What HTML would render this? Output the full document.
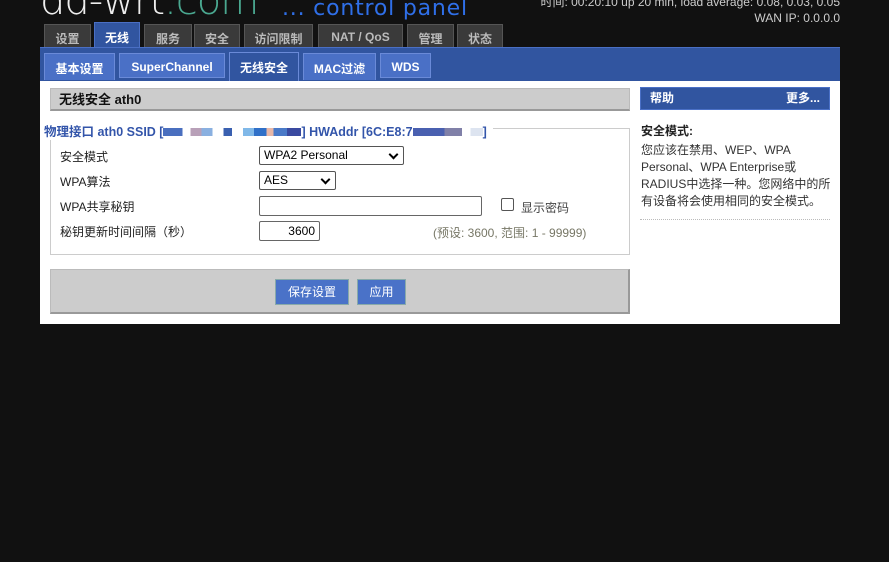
<!DOCTYPE html><html><head><meta charset="utf-8"><style>
*{margin:0;padding:0;box-sizing:border-box}
body{width:889px;height:562px;background:#111;font-family:"Liberation Sans","Noto Sans CJK SC",sans-serif;position:relative;overflow:hidden;font-size:12px}
.a{position:absolute}
.tab{position:absolute;top:24px;height:24px;background:#3a3a3a;border:1px solid #555;border-bottom:none;color:#bbb;font-weight:bold;font-size:12px;text-align:center;line-height:28px}
.st{position:absolute;top:53px;height:27px;background:#4a70c6;border:1px solid #6a8ad8;border-bottom:none;color:#fff;font-weight:bold;font-size:12px;text-align:center;line-height:26px}
.lbl{position:absolute;left:60px;color:#222;font-size:12px}
.sel{position:absolute;left:259px;height:19px;border:1px solid #555;border-radius:2px;background:#fff;font-size:12px;padding-left:4px;line-height:17px;color:#000}
.sel:after{content:"";position:absolute;right:6px;top:4px;width:5px;height:5px;border-right:2px solid #000;border-bottom:2px solid #000;transform:rotate(45deg)}
.btn{position:absolute;top:279px;height:26px;background:#4a72c8;border:1px solid #8aa;color:#fff;font-size:12px;text-align:center;line-height:24px}
</style></head><body>
<div class="a" style="left:40px;top:-22px;font-size:40px;color:#eee;font-family:'DejaVu Sans',sans-serif;font-weight:200;letter-spacing:-1px">dd-wrt<span style="color:#4aa890">.com</span></div>
<div class="a" style="left:282px;top:-4px;font-size:22px;color:#2f6fe8;font-family:'DejaVu Sans',sans-serif;letter-spacing:0.8px">... control panel</div>
<div class="a" style="right:49px;top:-6px;color:#ccc;font-size:12px;text-align:right;line-height:16px">时间: 00:20:10 up 20 min, load average: 0.08, 0.03, 0.05<br>WAN IP: 0.0.0.0</div>
<div class="tab" style="left:44px;width:47px">设置</div>
<div class="tab" style="left:94px;width:46px;top:22px;height:27px;background:#3155a0;border-color:#4a6fc4;color:#fff;line-height:30px">无线</div>
<div class="tab" style="left:144px;width:48px">服务</div>
<div class="tab" style="left:194px;width:46px">安全</div>
<div class="tab" style="left:244px;width:69px">访问限制</div>
<div class="tab" style="left:318px;width:85px;line-height:24px">NAT / QoS</div>
<div class="tab" style="left:407px;width:47px">管理</div>
<div class="tab" style="left:457px;width:46px">状态</div>
<div class="a" style="left:40px;top:47px;width:800px;height:34px;background:#3155a0;border-top:1px solid #4a6fc4"></div>
<div class="st" style="left:44px;width:71px;line-height:30px">基本设置</div>
<div class="st" style="left:119px;width:106px;height:25px;border-bottom:1px solid #6a8ad8">SuperChannel</div>
<div class="st" style="left:229px;top:52px;width:70px;height:29px;background:#3155a0;line-height:31px">无线安全</div>
<div class="st" style="left:303px;width:73px;line-height:30px">MAC过滤</div>
<div class="st" style="left:380px;width:51px;height:25px;border-bottom:1px solid #6a8ad8">WDS</div>
<div class="a" style="left:40px;top:81px;width:800px;height:243px;background:#fff"></div>
<div class="a" style="left:50px;top:88px;width:580px;height:23px;background:#ccc;border:1px solid #bbb;border-bottom:2px solid #999;font-weight:bold;font-size:13px;padding-left:8px;line-height:21px;color:#111">无线安全 ath0</div>
<div class="a" style="left:50px;top:128px;width:580px;height:127px;border:1px solid #ccc"></div>
<div class="a" style="left:44px;top:121px;background:#fff;color:#3355aa;font-weight:bold;font-size:12.5px;padding-right:6px">物理接口 ath0 SSID [<span style="display:inline-block;width:138px;height:8px;background:linear-gradient(90deg,#4a6fbf 0 14%,#fff 14% 20%,#b8a0b8 20% 28%,#8ab0e0 28% 36%,#fff 36% 44%,#3a60b0 44% 50%,#fff 50% 58%,#80b8e8 58% 66%,#3070c8 66% 75%,#e8b8a8 75% 80%,#4a7ac8 80% 90%,#3a4aa0 90%)"></span>] HWAddr [6C:E8:7<span style="display:inline-block;width:70px;height:8px;background:linear-gradient(90deg,#4a60b0 0 45%,#8080a8 45% 70%,#fff 70% 82%,#dde4f0 82%)"></span>]</div>
<div class="lbl" style="top:148px">安全模式</div>
<div class="sel" style="top:146px;width:145px">WPA2 Personal</div>
<div class="lbl" style="top:173px">WPA算法</div>
<div class="sel" style="top:171px;width:77px">AES</div>
<div class="lbl" style="top:198px">WPA共享秘钥</div>
<div class="a" style="left:259px;top:196px;width:223px;height:20px;border:1px solid #666;border-radius:2px"></div>
<div class="a" style="left:501px;top:198px;width:13px;height:13px;border:1px solid #555;border-radius:2px"></div>
<div class="a" style="left:521px;top:199px;color:#444">显示密码</div>
<div class="lbl" style="top:223px">秘钥更新时间间隔（秒）</div>
<div class="a" style="left:259px;top:221px;width:61px;height:20px;border:1px solid #666;border-radius:2px;text-align:right;padding-right:4px;line-height:18px;color:#000">3600</div>
<div class="a" style="left:433px;top:224px;color:#776">(预设: 3600, 范围: 1 - 99999)</div>
<div class="a" style="left:50px;top:269px;width:580px;height:45px;background:#ccc;border:1px solid #bbb;border-bottom:2px solid #999;border-right:2px solid #999"></div>
<div class="btn" style="left:275px;width:74px">保存设置</div>
<div class="btn" style="left:357px;width:49px">应用</div>
<div class="a" style="left:640px;top:87px;width:190px;height:23px;background:#3155a0;border:1px solid #4a70c6;color:#fff;font-weight:bold;line-height:21px;padding:0 9px">帮助<span style="float:right">更多...</span></div>
<div class="a" style="left:641px;top:122px;font-weight:bold;color:#222">安全模式:</div>
<div class="a" style="left:641px;top:142px;width:192px;line-height:17px;color:#333">您应该在禁用、WEP、WPA Personal、WPA Enterprise或RADIUS中选择一种。您网络中的所有设备将会使用相同的安全模式。</div>
<div class="a" style="left:640px;top:219px;width:190px;border-top:1px dotted #bbb"></div>
</body></html>
